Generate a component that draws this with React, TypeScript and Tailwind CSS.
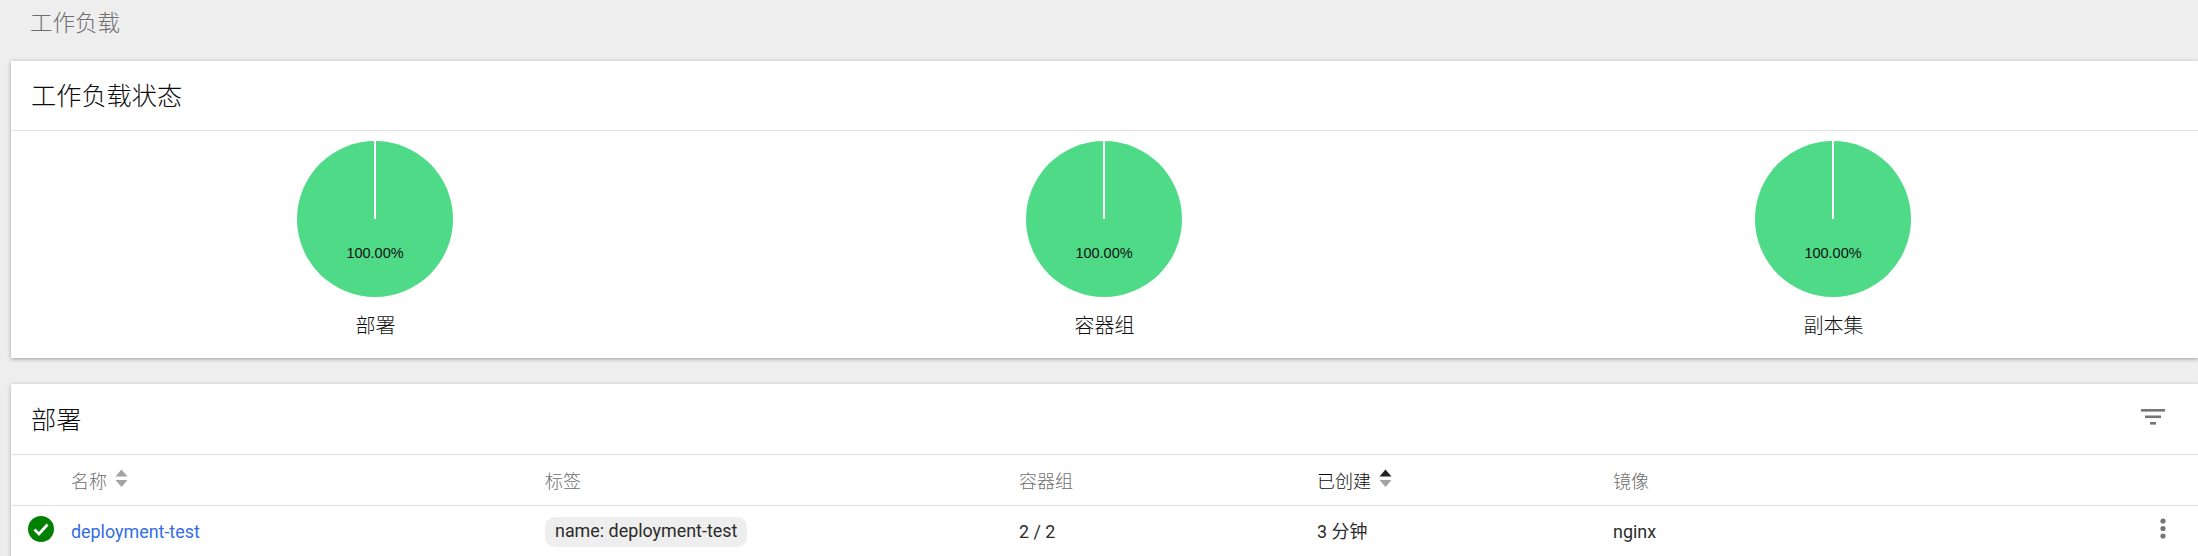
const FONT = "font-['Roboto','Noto_Sans_CJK_SC',sans-serif]";

const pies = ['部署', '容器组', '副本集'];

function Pie({ label }: { label: string }) {
  return (
    <div className="flex flex-col items-center">
      <svg width="158" height="158" viewBox="0 0 158 158" className="-ml-[1px] block">
        <circle cx="79" cy="79" r="78" fill="#4eda87" />
        <line x1="79" y1="1" x2="79" y2="79" stroke="#ffffff" strokeWidth="2" />
        <text
          x="79"
          y="118"
          textAnchor="middle"
          fontSize="14.5"
          fill="#111111"
          fontFamily="'Liberation Sans', Arial, sans-serif"
        >
          100.00%
        </text>
      </svg>
      <div className="mt-[13px] text-[20px] font-light leading-[30px] text-[#111111]">{label}</div>
    </div>
  );
}

function SortArrows({ active }: { active?: boolean }) {
  return (
    <svg width="13" height="19" viewBox="0 0 13 19" className="mb-[5px] ml-[8px] block">
      <path d="M6.5 0.5 L12.5 7.5 L0.5 7.5 Z" fill={active ? '#222222' : '#a3a3a3'} />
      <path d="M0.5 11 L12.5 11 L6.5 18 Z" fill="#a3a3a3" />
    </svg>
  );
}

export default function App() {
  return (
    <div className={`${FONT} h-[556px] w-[2198px] overflow-hidden bg-[#eeeeee]`}>
      <div className="pl-[30px] pt-[9px] text-[22.5px] font-light leading-[28px] text-[#6e6e6e]">工作负载</div>

      {/* Status card */}
      <div className="ml-[11px] mt-[24px] h-[297px] w-[2187px] bg-white shadow-[0_1px_4px_rgba(0,0,0,0.35)]">
        <div className="flex h-[70px] items-center border-b-[1.5px] border-[#e0e0e0] pl-[20px] pt-[2px] text-[25.2px] font-light text-[#0c0c0c]">
          工作负载状态
        </div>
        <div className="grid grid-cols-3 pt-[9px]">
          {pies.map((p) => (
            <Pie key={p} label={p} />
          ))}
        </div>
      </div>

      {/* Deployments card */}
      <div className="ml-[11px] mt-[26px] h-[200px] w-[2187px] bg-white shadow-[0_1px_4px_rgba(0,0,0,0.3)]">
        <div className="flex h-[71px] items-center justify-between border-b-[1.5px] border-[#e0e0e0] pl-[20px] pr-[33px] pt-[3px] text-[25.2px] font-light text-[#0c0c0c]">
          <span>部署</span>
          <svg width="24" height="17" viewBox="0 0 24 17" className="mb-[6px] block">
            <rect x="0" y="0" width="24" height="2.6" fill="#757575" />
            <rect x="4" y="6.5" width="16" height="2.6" fill="#757575" />
            <rect x="9" y="13" width="6" height="2.6" fill="#757575" />
          </svg>
        </div>

        <div className="flex h-[51px] items-center border-b-[1.5px] border-[#e0e0e0] pt-[2px] text-[18px] font-light text-[#6e6e6e]">
          <div className="flex w-[534px] items-center pl-[60px]">
            名称
            <SortArrows />
          </div>
          <div className="w-[474px]">标签</div>
          <div className="w-[298px]">容器组</div>
          <div className="flex w-[296px] items-center text-[#0c0c0c]">
            已创建
            <SortArrows active />
          </div>
          <div>镜像</div>
        </div>

        <div className="flex h-[48px] items-center text-[17.9px] text-[#2b2b2b]">
          <div className="flex w-[534px] items-center">
            <svg width="26" height="26" viewBox="0 0 26 26" className="mb-[1px] ml-[17px] mr-[17px] block">
              <circle cx="13" cy="13" r="13" fill="#008000" />
              <path d="M6.5 13.5 L11 18 L19.5 8.5" fill="none" stroke="#ffffff" strokeWidth="2.8" />
            </svg>
            <span className="pt-[5px] text-[#326de6]">deployment-test</span>
          </div>
          <div className="w-[474px] pt-[3px]">
            <span className="inline-flex h-[30px] items-center rounded-[10px] bg-[#eeeeee] px-[10px]">
              name: deployment-test
            </span>
          </div>
          <div className="w-[298px] pt-[5px]">2 / 2</div>
          <div className="w-[296px] pt-[5px]">3 分钟</div>
          <div className="flex-1 pt-[5px]">nginx</div>
          <svg width="8" height="22" viewBox="0 0 8 22" className="mb-[2px] mr-[31px] block">
            <circle cx="4" cy="3" r="2.6" fill="#757575" />
            <circle cx="4" cy="10.5" r="2.6" fill="#757575" />
            <circle cx="4" cy="18" r="2.6" fill="#757575" />
          </svg>
        </div>
      </div>
    </div>
  );
}
